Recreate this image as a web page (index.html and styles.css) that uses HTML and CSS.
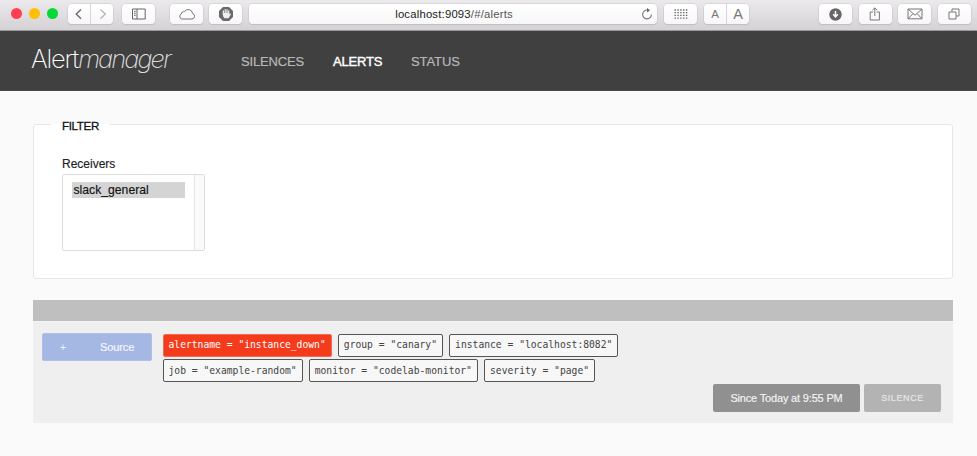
FILE: index.html
```html
<!DOCTYPE html>
<html lang="en">
<head>
<meta charset="utf-8">
<title>Alertmanager</title>
<link rel="stylesheet" href="styles.css">
</head>
<body>
<div class="toolbar">
  <div class="lights"><i class="light red"></i><i class="light yellow"></i><i class="light green"></i></div>
  <div class="btn pair history">
    <span><svg width="22" height="20" viewBox="0 0 22 20"><path d="M13 5.5 8.2 10l4.8 4.8" stroke="#666" stroke-width="1.3"/></svg></span>
    <span><svg width="22" height="20" viewBox="0 0 22 20"><path d="m9.5 5.5 4.8 4.5-4.8 4.8" stroke="#b5b5b5" stroke-width="1.3"/></svg></span>
  </div>
  <div class="btn sidebar"><svg width="14" height="12" viewBox="0 0 14 12"><path d="M.5 1h12.7v10H.5zM5 1v10M2 3.3h1.7M2 5.3h1.7M2 7.3h1.7" stroke="#666"/></svg></div>
  <div class="btn cloud"><svg width="18" height="12" viewBox="0 0 18 12"><path d="M4.2 11h9.6a2.8 2.8 0 0 0 .7-5.5A4.3 4.3 0 0 0 6.4 3.8 2.3 2.3 0 0 0 3.3 6 2.6 2.6 0 0 0 4.2 11z" stroke="#777"/></svg></div>
  <div class="btn blocker"><svg width="14" height="14" viewBox="0 0 14 14"><path d="M4 0h6l4 4v6l-4 4H4l-4-4V4z" fill="#696969"/><path d="M4.4 7.5V3.8M6.2 6.5V2.5M8 6.5V2.7M9.7 7V3.8" stroke="#eee" stroke-width="1.2" stroke-linecap="round"/><path d="M3.8 6h6.5v1.5l1.2-1 .5.7-2.5 4H5.5C4.2 10 3.8 9 3.8 6z" fill="#eee"/></svg></div>
  <div class="btn address"><span class="url">localhost:9093<em>/#/alerts</em></span><svg class="reload" width="12" height="12" viewBox="0 0 12 12"><path d="M6.5 2.1A4.4 4.4 0 1 0 10.4 6.5" stroke="#777" stroke-width="1.1"/><path d="M6 0v4.4L9 2.2z" fill="#666"/></svg></div>
  <div class="btn grid"><svg width="14" height="10" viewBox="0 0 14 10"><path d="M.5 1h14M.5 3.7h14M.5 6.4h14M.5 9.1h14" stroke="#666" stroke-width="1.3" stroke-dasharray="1.4 1.45"/></svg></div>
  <div class="btn pair zoom"><span class="small">A</span><span class="large">A</span></div>
  <div class="btn download"><svg width="13" height="13" viewBox="0 0 13 13"><circle cx="6.5" cy="6.5" r="6.2" fill="#666"/><path d="M6.5 3v5M4.2 6.3l2.3 2.5 2.3-2.5" stroke="#fff" stroke-width="1.5"/></svg></div>
  <div class="btn share"><svg width="12" height="14" viewBox="0 0 12 14"><path d="M4 5H1.2v8h9.2V5H7.6M5.8 9V1M3.4 3.2 5.8.9l2.4 2.3" stroke="#777"/></svg></div>
  <div class="btn mail"><svg width="16" height="12" viewBox="0 0 16 12"><path d="M1 1h14v9.8H1zM1.3 1.3 8 7.2l6.7-5.9M1.3 10.5 6 5.6M14.7 10.5 10 5.6" stroke="#777"/></svg></div>
  <div class="btn tabs"><svg width="12" height="12" viewBox="0 0 12 12"><path d="M1 4h7v7H1zM4 3.7V1h7v7H8.3" stroke="#777"/></svg></div>
</div>
<header class="header">
  <div class="logo">Alert<em>manager</em></div>
  <nav class="nav"><a class="n-silences">SILENCES</a><a class="n-alerts active">ALERTS</a><a class="n-status">STATUS</a></nav>
</header>
<main class="main">
  <fieldset class="filter">
    <legend>FILTER</legend>
    <label class="label">Receivers</label>
    <div class="select"><div class="options"><div class="option">slack_general</div></div><div class="track"></div></div>
  </fieldset>
  <section class="group">
    <div class="group-head"></div>
    <div class="alert">
      <div class="row">
        <div class="source"><span class="plus">+</span><span class="source-text">Source</span></div>
        <div class="labels">
          <div class="tags"><span class="tag hot">alertname = "instance_down"</span><span class="tag">group = "canary"</span><span class="tag">instance = "localhost:8082"</span></div>
          <div class="tags"><span class="tag">job = "example-random"</span><span class="tag">monitor = "codelab-monitor"</span><span class="tag">severity = "page"</span></div>
        </div>
      </div>
      <div class="actions"><span class="since">Since Today at 9:55 PM</span><span class="silence">SILENCE</span></div>
    </div>
  </section>
</main>
</body>
</html>
```
FILE: styles.css
```css
* { box-sizing: border-box; }
body { margin: 0; background: #fafafa; color: #222; font: 12px "Liberation Sans", Arial, sans-serif; height: 456px; overflow: hidden; }
svg { display: block; fill: none; flex: none; }
em { font-style: normal; }
.toolbar { height: 31px; display: flex; align-items: flex-start; padding: 4px 0 0 11px; background: linear-gradient(#ebe9eb, #d5d2d5); border-bottom: 1px solid #9b999b; }
.lights { display: flex; gap: 7px; width: 57px; padding-top: 4px; }
.light { width: 11px; height: 11px; border-radius: 50%; }
.red { background: #ff4052; }
.yellow { background: #ffbf07; }
.green { background: #06d937; }
.btn { height: 20px; width: 33px; flex: none; display: flex; align-items: center; justify-content: center; background: linear-gradient(#fff, #f7f7f7); border-radius: 4px; box-shadow: 0 0 0 .5px #c9c7c9, 0 1px 1px #b8b5b8; }
.pair { width: 45px; }
.pair span { flex: 1; height: 20px; display: flex; align-items: center; justify-content: center; color: #777; }
.pair span + span { border-left: 1px solid #d8d6d8; }
.sidebar { margin-left: 9px; }
.cloud { margin-left: 15px; }
.blocker { margin-left: 6px; }
.address { margin-left: 7px; width: 408px; position: relative; }
.url { font-size: 11.3px; color: #222; white-space: nowrap; padding: 0 0 0 2px; letter-spacing: .2px; }
.url em { color: #555; }
.reload { position: absolute; right: 4px; top: 4px; }
.grid { margin-left: 7px; }
.zoom { margin-left: 7px; }
.pair .small { font-size: 11.5px; }
.pair .large { font-size: 14.5px; }
.download { margin-left: 70px; }
.share, .mail, .tabs { margin-left: 6.5px; }
.header { height: 60px; display: flex; align-items: center; background: #404040; padding-left: 31px; border-bottom: 1px solid #4c4848; }
.logo { width: 210px; font: 200 25.5px/30px Inter, sans-serif; letter-spacing: -1.25px; color: #fff; white-space: nowrap; padding-bottom: 3px; }
.logo em { font-style: italic; color: #ddd; letter-spacing: -1.95px; }
.nav { display: flex; font-size: 13px; line-height: 18px; color: #b8b8b8; padding-top: 2px; }
.nav a { white-space: nowrap; -webkit-text-stroke: .2px currentColor; }
.n-silences { width: 92px; letter-spacing: -.15px; }
.n-alerts { width: 78px; letter-spacing: -.2px; }
.n-status { letter-spacing: -.1px; }
.nav .active { color: #fff; -webkit-text-stroke: .4px #fff; }
.main { padding: 26px 24px 0 33px; }
.filter { margin: 0; height: 162px; border: 1px solid #e6e6e6; border-radius: 3px; background: #fff; padding: 24px 28px 0 17px; min-width: 0; }
.filter legend { padding: 3px 11px 0 11px; font-size: 11.6px; line-height: 12px; color: #111; letter-spacing: -.35px; -webkit-text-stroke: .3px #111; }
.label { display: block; margin-left: 11px; line-height: 16px; font-size: 12px; color: #222; -webkit-text-stroke: .15px #222; }
.select { margin: 2px 0 0 11px; width: 143px; height: 77px; border: 1px solid #ddd; border-radius: 2px; display: flex; }
.options { flex: 1; padding: 7px 9px; }
.option { background: #d4d4d4; height: 16px; line-height: 16px; padding-left: 1.5px; font-size: 12.2px; color: #111; -webkit-text-stroke: .15px #111; }
.track { width: 10px; border-left: 1px solid #e6e6e6; background: #fafafa; }
.group { margin-top: 21px; }
.group-head { height: 21px; background: #bfbfbf; }
.alert { height: 102px; background: #efefef; border-top: 1px solid #f4f4f4; padding: 11px 12px 0 9px; }
.row { display: flex; }
.source { width: 110px; height: 28px; margin-right: 10.5px; display: flex; align-items: center; background: #a5b8e4; border-radius: 2px; color: #f3f6fc; font-size: 11px; padding-left: 17px; border: 1px solid #afbfe5; }
.plus { width: 40px; font-size: 10px; }
.source-text { letter-spacing: -.1px; -webkit-text-stroke: .2px #f3f6fc; margin-top: -1px; }
.tags { display: flex; gap: 6.1px; margin-bottom: 2px; padding-top: 1px; }
.tags + .tags { margin-top: -1px; }
.tag { height: 23px; border: 1px solid #555; border-radius: 2px; background: #f7f7f7; padding: 0 5px; font: 9.69px/20px "DejaVu Sans Mono", monospace; color: #444; white-space: nowrap; }
.tags + .tags .tag { line-height: 21px; }
.tags .hot { background: #f43b1b; border-color: #f66a50; color: #fff; }
.actions { display: flex; justify-content: flex-end; gap: 4px; }
.since, .silence { height: 28px; border-radius: 2px; text-align: center; white-space: nowrap; }
.since { width: 147px; line-height: 28px; background: #909090; color: #f5f5f5; font-size: 11px; letter-spacing: -.17px; -webkit-text-stroke: .15px #f5f5f5; }
.silence { width: 77px; line-height: 29px; background: #b3b3b3; color: #e6e6e6; font-size: 9px; letter-spacing: .6px; -webkit-text-stroke: .2px #e6e6e6; }
```
